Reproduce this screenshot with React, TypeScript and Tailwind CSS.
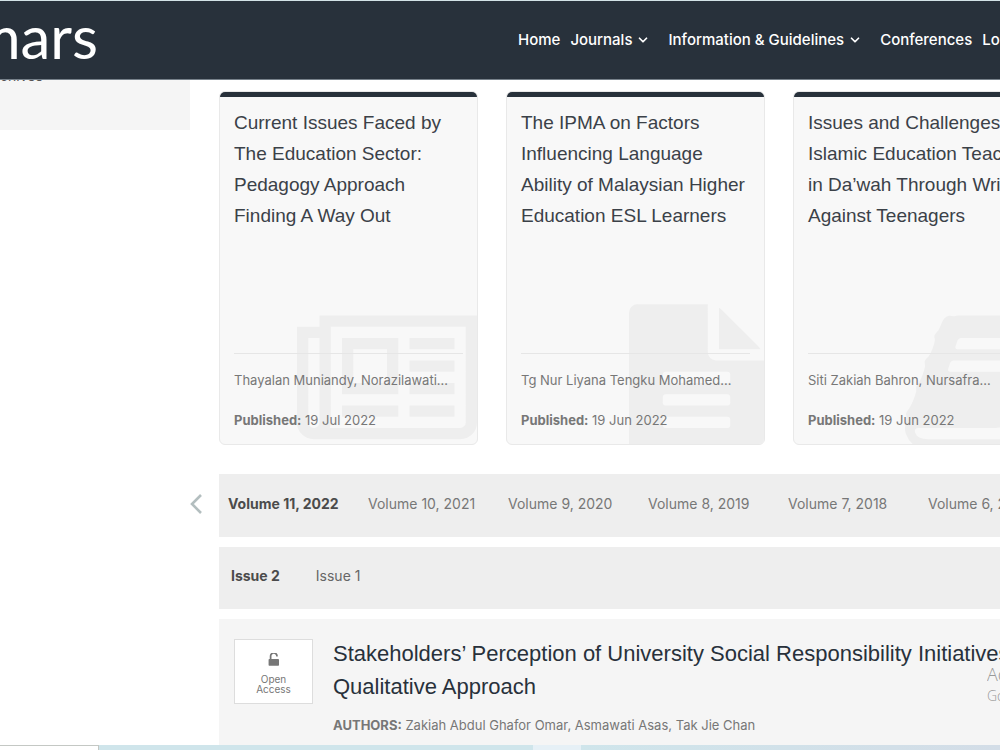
import { ChevronDown } from "lucide-react";
import type { ReactNode } from "react";

type Paper = {
  title: string;
  authors: string;
  published: string;
  icon: ReactNode;
};

const navItems = [
  { label: "Home", hasMenu: false },
  { label: "Journals", hasMenu: true },
  { label: "Information & Guidelines", hasMenu: true },
  { label: "Conferences", hasMenu: false },
  { label: "Login", hasMenu: false },
];

const papers: Paper[] = [
  {
    title:
      "Current Issues Faced by The Education Sector: Pedagogy Approach Finding A Way Out",
    authors: "Thayalan Muniandy, Norazilawati…",
    published: "19 Jul 2022",
    icon: <NewspaperIcon />,
  },
  {
    title:
      "The IPMA on Factors Influencing Language Ability\u00a0of Malaysian Higher Education ESL Learners",
    authors: "Tg Nur Liyana Tengku Mohamed…",
    published: "19 Jun 2022",
    icon: <FileIcon />,
  },
  {
    title:
      "Issues and Challenges of Islamic Education Teachers in Da’wah Through Writing Against Teenagers",
    authors: "Siti Zakiah Bahron, Nursafra…",
    published: "19 Jun 2022",
    icon: <BookIcon />,
  },
];

const volumes = [
  "Volume 11, 2022",
  "Volume 10, 2021",
  "Volume 9, 2020",
  "Volume 8, 2019",
  "Volume 7, 2018",
  "Volume 6, 2017",
];

export default function App() {
  return (
    <div className="relative h-screen overflow-hidden bg-white font-['Inter',sans-serif] text-[#777]">
      <Header />
      <div className="flex items-start">
        <aside className="h-[50px] w-[190px] shrink-0 bg-[#f5f5f5]">
          <a href="#archives" className="-mt-3.5 block text-sm leading-5 text-[#555]">
            chives
          </a>
        </aside>
        <main className="ml-[29px] min-w-0 flex-1 pt-[11px]">
          <section className="flex gap-7" aria-label="Popular papers">
            {papers.map((paper) => (
              <PaperCard key={paper.title} paper={paper} />
            ))}
          </section>
          <VolumeTabs />
          <IssueTabs />
          <ArticleRow />
        </main>
      </div>
      <ActivationNotice />
      <Taskbar />
    </div>
  );
}

function Header() {
  return (
    <header className="relative z-10 flex h-20 items-center border-t border-b border-t-[#d3e2e6] border-b-[#77818a] bg-[#28313b] text-white">
      <a
        href="#top"
        className="flex w-[98px] shrink-0 justify-end overflow-hidden pb-2 font-['Lato',sans-serif] text-[60px] leading-[68px]"
      >
        mars
      </a>
      <nav className="ml-[420px] flex shrink-0 gap-2.5 text-[15px] leading-5 font-medium whitespace-nowrap">
        {navItems.map((item) => (
          <a
            key={item.label}
            href="#menu"
            className={item.hasMenu ? "flex items-center gap-1 pr-2" : ""}
          >
            {item.label}
            {item.hasMenu ? <ChevronDown size={14} strokeWidth={3} /> : null}
          </a>
        ))}
      </nav>
    </header>
  );
}

function PaperCard({ paper }: { paper: Paper }) {
  return (
    <article className="relative flex h-[354px] w-[259px] shrink-0 flex-col overflow-hidden rounded-md border border-[#e9e9e9] bg-[#f8f8f8]">
      <div className="-mx-px -mt-px h-1.5 shrink-0 bg-[#28313b]" />
      <div className="absolute right-0 -bottom-[18px] text-[#eee]">{paper.icon}</div>
      <div className="relative flex flex-1 flex-col px-3.5 pt-2.5 pb-3.5">
        <h2 className="-mr-2 font-['Liberation_Sans',sans-serif] text-[19px] leading-[31px] text-[#3b4148]">
          {paper.title}
        </h2>
        <div className="mt-auto border-t border-[#e6e6e6] pt-4 text-[13px] leading-5">
          <p className="truncate">{paper.authors}</p>
          <p className="mt-5">
            <strong>Published:</strong> {paper.published}
          </p>
        </div>
      </div>
    </article>
  );
}

function VolumeTabs() {
  return (
    <div className="mt-[29px] flex">
      <button
        type="button"
        aria-label="Previous volumes"
        className="-ml-[29px] flex w-[29px] shrink-0 items-center pb-1 text-[#b3bebf]"
      >
        <svg viewBox="0 0 12 20" className="h-5 w-3" fill="none" stroke="currentColor" strokeWidth="2.6" aria-hidden="true">
          <path d="M11 1L2 10l9 9" />
        </svg>
      </button>
      <div className="flex h-[63px] flex-1 items-center overflow-hidden bg-[#eee] pb-1 pl-[9px] text-sm">
        {volumes.map((volume, index) => (
          <a
            key={volume}
            href="#volume"
            className={
              index === 0
                ? "w-[140px] shrink-0 font-bold text-[#4b4b4b]"
                : "w-[140px] shrink-0"
            }
          >
            {volume}
          </a>
        ))}
      </div>
    </div>
  );
}

function IssueTabs() {
  return (
    <div className="mt-2.5 flex h-[62px] items-center gap-9 bg-[#eee] pb-1 pl-3 text-sm">
      <a href="#issue-2" className="font-bold text-[#4b4b4b]">
        Issue 2
      </a>
      <a href="#issue-1" className="text-[#666]">
        Issue 1
      </a>
    </div>
  );
}

function ArticleRow() {
  return (
    <article className="mt-2.5 flex h-[180px] items-start gap-5 bg-[#f5f5f5] py-5 pl-[15px]">
      <div className="flex h-[65px] w-[79px] shrink-0 flex-col items-center border border-[#ddd] bg-white pt-[13px] text-center text-[10px] leading-[10px]">
        <UnlockIcon />
        <span className="mt-2">
          Open
          <br />
          Access
        </span>
      </div>
      <div className="shrink-0 whitespace-nowrap">
        <h2 className="-mt-0.5 font-['Liberation_Sans',sans-serif] text-[22px] leading-[33px] text-[#28313b]">
          Stakeholders’ Perception of University Social Responsibility Initiatives:
          <br />
          Qualitative Approach
        </h2>
        <p className="mt-3 text-[13px] leading-5">
          <strong>AUTHORS:</strong> Zakiah Abdul Ghafor Omar, Asmawati Asas, Tak Jie Chan
        </p>
      </div>
    </article>
  );
}

function ActivationNotice() {
  return (
    <div className="absolute right-0 bottom-11 w-[13px] overflow-hidden font-['Open_Sans',sans-serif] font-light whitespace-nowrap text-[#999]">
      <p className="text-lg leading-6">Activate</p>
      <p className="text-sm leading-5">Go to</p>
    </div>
  );
}

function Taskbar() {
  return (
    <div className="absolute inset-x-0 bottom-0 flex h-[5px]">
      <div className="w-[99px] border-t border-r border-[#c4c8c4] bg-white" />
      <div className="w-[434px] bg-[#cfe5eb]" />
      <div className="w-12 bg-[#e6f0f6]" />
      <div className="flex-1 bg-gradient-to-r from-[#cfe5eb] to-[#d3dde7]" />
    </div>
  );
}

function NewspaperIcon() {
  return (
    <svg viewBox="0 0 2048 1792" className="h-[158px] w-[180px]" fill="currentColor" aria-hidden="true">
      <path d="M1024 512h-384v384h384v-384zm128 640v128h-640v-128h640zm0-768v640h-640v-640h640zm640 768v128h-512v-128h512zm0-256v128h-512v-128h512zm0-256v128h-512v-128h512zm0-256v128h-512v-128h512zm-1536 960v-960h-128v960q0 26 19 45t45 19 45-19 19-45zm1664 0v-1088h-1536v1088q0 33-11 64h1483q26 0 45-19t19-45zm128-1216v1216q0 80-56 136t-136 56h-1664q-80 0-136-56t-56-136v-1088h256v-128h1792z" />
    </svg>
  );
}

function FileIcon() {
  return (
    <svg viewBox="128 0 1536 1792" className="h-[158px] w-[135px]" fill="currentColor" aria-hidden="true">
      <path d="M1596 476q14 14 28 36h-472v-472q22 14 36 28zm-476 164h544v1056q0 40-28 68t-68 28h-1344q-40 0-68-28t-28-68v-1600q0-40 28-68t68-28h800v544q0 40 28 68t68 28zm160 736v-64q0-14-9-23t-23-9h-704q-14 0-23 9t-9 23v64q0 14 9 23t23 9h704q14 0 23-9t9-23zm0-256v-64q0-14-9-23t-23-9h-704q-14 0-23 9t-9 23v64q0 14 9 23t23 9h704q14 0 23-9t9-23zm0-256v-64q0-14-9-23t-23-9h-704q-14 0-23 9t-9 23v64q0 14 9 23t23 9h704q14 0 23-9t9-23z" />
    </svg>
  );
}

function BookIcon() {
  return (
    <svg viewBox="64 0 1664 1792" className="h-[158px] w-[146px]" fill="currentColor" aria-hidden="true">
      <path d="M1703 478q40 57 18 129l-275 906q-19 64-76.500 107.500t-122.500 43.500h-923q-77 0-148.500-53.500t-99.500-131.500q-24-67-2-127 0-4 3-27t4-37q1-8-3-21.500t-3-19.500q2-11 8-21t16.500-23.500 16.500-23.500q23-38 45-91.500t30-91.500q3-10 .5-30t-.5-28q3-11 17-28t17-23q21-36 42-92t25-90q1-9-2.500-32t.5-28q4-13 22-30.500t22-22.500q19-26 42.500-84.500t27.500-96.500q1-8-3-25.500t-2-26.500q2-8 9-18t18-23 17-21q8-12 16.500-30.500t15-35 16-36 19.500-32 26.500-23.500 36-11.500 47.500 5.500l-1 3q38-9 51-9h761q74 0 114 56t18 130l-274 906q-36 119-71.500 153.500t-128.500 34.500h-869q-27 0-38 15-11 16-1 43 24 70 144 70h923q29 0 56-15.500t35-41.500l300-987q7-22 5-57 38 15 59 43zm-1064 2q-4 13 2 22.500t20 9.500h608q13 0 25.500-9.500t16.500-22.500l21-64q4-13-2-22.500t-20-9.500h-608q-13 0-25.500 9.500t-16.500 22.500zm-83 256q-4 13 2 22.500t20 9.500h608q13 0 25.500-9.500t16.500-22.500l21-64q4-13-2-22.500t-20-9.500h-608q-13 0-25.500 9.500t-16.500 22.500z" />
    </svg>
  );
}

function UnlockIcon() {
  return (
    <svg viewBox="256 128 1216 1408" className="h-[13px] w-[11px] shrink-0" fill="currentColor" aria-hidden="true">
      <path d="M1376 768q40 0 68 28t28 68v576q0 40-28 68t-68 28h-960q-40 0-68-28t-28-68v-576q0-40 28-68t68-28h32v-320q0-185 131.500-316.500t316.500-131.500 316.500 131.500 131.500 316.500q0 26-19 45t-45 19h-64q-26 0-45-19t-19-45q0-106-75-181t-181-75-181 75-75 181v320h736z" />
    </svg>
  );
}
